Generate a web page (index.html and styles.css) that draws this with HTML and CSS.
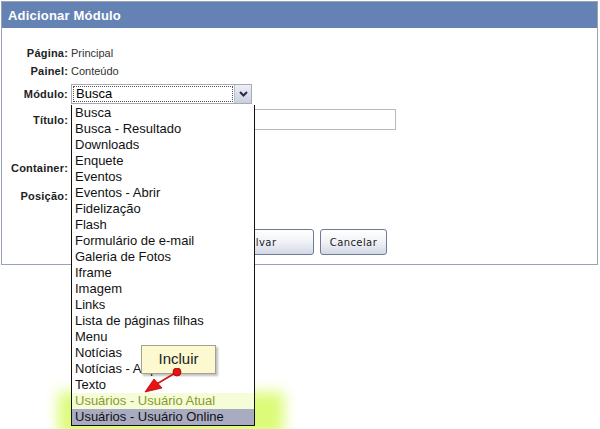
FILE: index.html
```html
<!DOCTYPE html>
<html lang="pt-BR">

<head>
    <meta charset="UTF-8">
    <title>Adicionar Módulo</title>
    <link rel="stylesheet" href="styles.css">
</head>

<body>
    <div class="panel">
        <div class="panel-header">Adicionar Módulo</div>

        <div class="form">
            <div class="row row-text">
                <div class="label">Página:</div>
                <div class="value">Principal</div>
            </div>
            <div class="row row-text row-painel">
                <div class="label">Painel:</div>
                <div class="value">Conteúdo</div>
            </div>
            <div class="row row-select">
                <div class="label">Módulo:</div>
                <div class="select">
                    <div class="select-text">Busca</div>
                    <div class="select-arrow">
                        <svg width="9" height="6" viewBox="0 0 9 6"><path d="M1 1 L4.5 4.5 L8 1" fill="none" stroke="#2a2a4a" stroke-width="2"/></svg>
                    </div>
                </div>
            </div>
            <div class="row row-input">
                <div class="label">Título:</div>
                <div class="input"></div>
            </div>
            <div class="row row-container">
                <div class="label">Container:</div>
            </div>
            <div class="row row-posicao">
                <div class="label">Posição:</div>
            </div>
            <div class="buttons">
                <button class="btn btn-salvar">Salvar</button>
                <button class="btn">Cancelar</button>
            </div>
        </div>
    </div>

    <div class="glow"></div>

    <ul class="dropdown">
        <li>Busca</li>
        <li>Busca - Resultado</li>
        <li>Downloads</li>
        <li>Enquete</li>
        <li>Eventos</li>
        <li>Eventos - Abrir</li>
        <li>Fidelização</li>
        <li>Flash</li>
        <li>Formulário de e-mail</li>
        <li>Galeria de Fotos</li>
        <li>Iframe</li>
        <li>Imagem</li>
        <li>Links</li>
        <li>Lista de páginas filhas</li>
        <li>Menu</li>
        <li>Notícias</li>
        <li>Notícias - Arquivo</li>
        <li>Texto</li>
        <li class="tinted">Usuários - Usuário Atual</li>
        <li class="selected">Usuários - Usuário Online</li>
    </ul>

    <div class="callout">Incluir</div>
    <svg class="pointer" width="60" height="40" viewBox="0 0 60 40">
        <line x1="36" y1="4" x2="14" y2="17" stroke="#d41010" stroke-width="1.5"/>
        <polygon points="4,24 13,11 21,20" fill="#e81414" stroke="#b00" stroke-width="0.8"/>
        <circle cx="36" cy="4" r="4" fill="#e81414" stroke="#a00" stroke-width="0.8"/>
    </svg>
</body>

</html>
```

FILE: styles.css
```css
body {
    margin: 0;
    background: white;
    font-family: "Liberation Sans", Arial, sans-serif;
    width: 600px;
    height: 429px;
    overflow: hidden;
    position: relative;
}

.panel {
    margin: 1px 0 0 1px;
    width: 595px;
    border: 1px solid #9aa3b3;
    background: white;
}

.panel-header {
    height: 26px;
    line-height: 27px;
    background-color: #6483b4;
    color: white;
    font-weight: bold;
    font-size: 13px;
    letter-spacing: 0.2px;
    padding-left: 6px;
}

.form {
    padding: 17px 0 9px 0;
}

.row {
    display: flex;
    align-items: center;
}

.label {
    width: 66px;
    text-align: right;
    font-weight: bold;
    font-size: 11px;
    color: #222;
    letter-spacing: 0.2px;
    margin-right: 3px;
}

.value {
    font-size: 11px;
    color: #333;
}

.row-text {
    height: 16px;
}

.row-painel {
    margin-top: 2px;
}

.row-select {
    height: 20px;
    margin-top: 5px;
}

.row-input {
    height: 21px;
    margin-top: 5px;
}

.row-container {
    height: 20px;
    margin-top: 28px;
}

.row-posicao {
    height: 20px;
    margin-top: 8px;
}

.select {
    width: 179px;
    height: 18px;
    border: 1px solid #a5acb5;
    display: flex;
    align-items: stretch;
}

.select-text {
    flex: 1;
    margin: 1px;
    outline: 1px dotted #555;
    outline-offset: -1px;
    font-size: 13px;
    line-height: 16px;
    padding-left: 3px;
}

.select-arrow {
    width: 16px;
    background: linear-gradient(#eef0f6, #c9cfe0);
    border-left: 1px solid #b8bfcc;
    display: flex;
    align-items: center;
    justify-content: center;
}

.input {
    width: 323px;
    height: 19px;
    border: 1px solid #b5b9c0;
}

.buttons {
    display: flex;
    gap: 6px;
    margin: 23px 0 0 203px;
}

.btn {
    width: 67px;
    height: 26px;
    border: 1px solid #6e7b91;
    border-radius: 3px;
    background: linear-gradient(#ffffff, #f1f2f7 50%, #d3d8e6);
    font-family: "DejaVu Sans", Verdana, sans-serif;
    font-size: 10px;
    letter-spacing: 0.4px;
    color: #222;
    padding: 0;
}

.btn-salvar {
    width: 109px;
}

.glow {
    position: absolute;
    left: 58px;
    top: 392px;
    width: 226px;
    height: 44px;
    background: #dcfb78;
    filter: blur(7px);
}

.dropdown {
    position: absolute;
    left: 71px;
    top: 105px;
    width: 182px;
    margin: 0;
    padding: 0;
    list-style: none;
    background: white;
    border: 1px solid #111;
    border-top: none;
}

.dropdown li {
    height: 16px;
    line-height: 16px;
    font-size: 13px;
    padding-left: 3px;
    color: #111;
    white-space: nowrap;
}

.dropdown li.tinted {
    background: #f4fcd8;
    color: #8a9a2a;
}

.dropdown li.selected {
    background: #a9abc1;
    color: #111;
}

.callout {
    position: absolute;
    left: 141px;
    top: 345px;
    width: 73px;
    height: 27px;
    background: #fcf8d0;
    border: 1px solid #a4a28c;
    box-shadow: 2px 2px 2px rgba(0, 0, 0, 0.25);
    font-size: 15px;
    line-height: 25px;
    text-align: center;
    color: #222;
}

.pointer {
    position: absolute;
    left: 141px;
    top: 368px;
}
```
